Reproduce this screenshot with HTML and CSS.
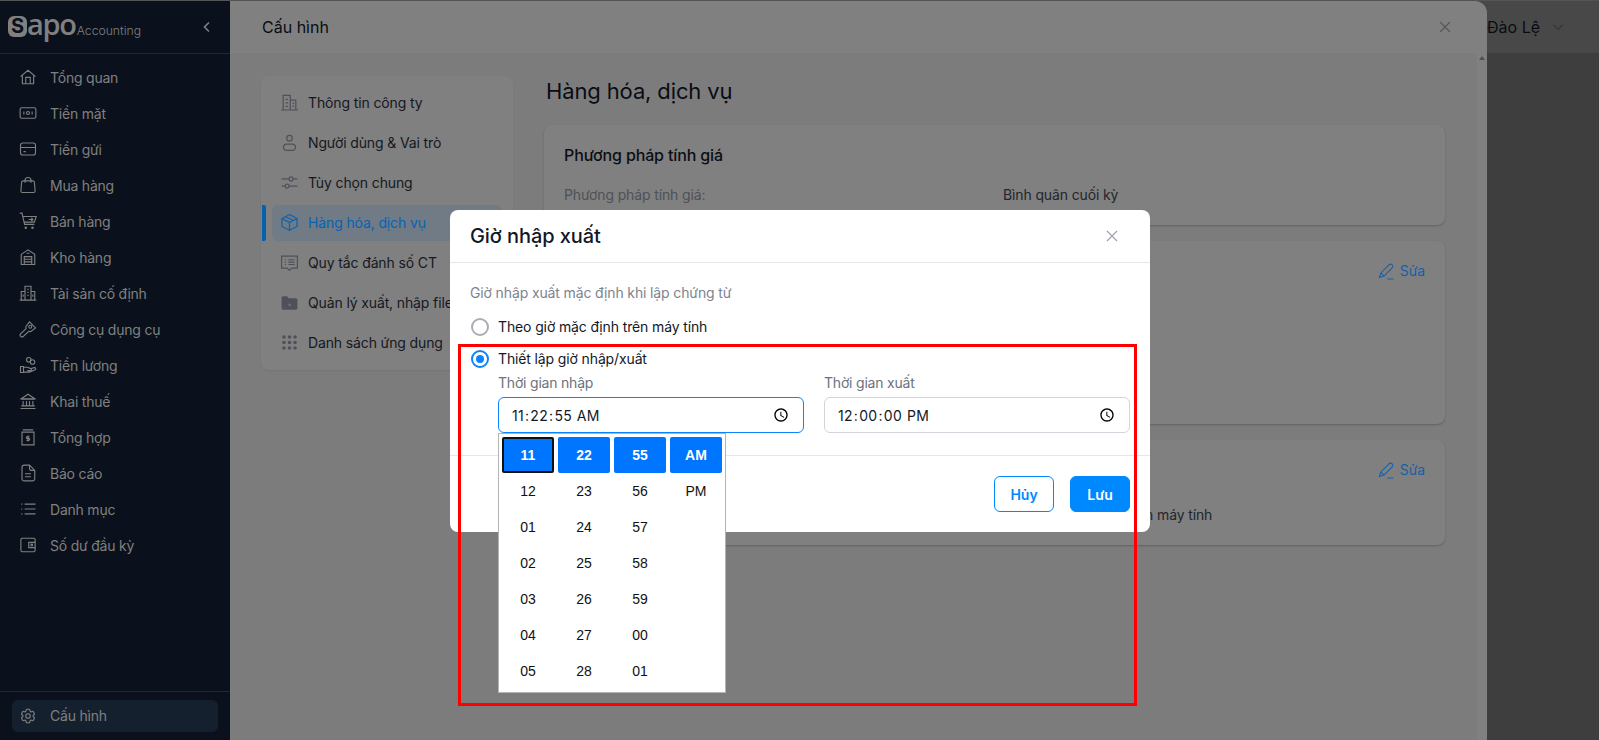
FILE: index.html
```html
<!DOCTYPE html>
<html lang="vi">
<head>
<meta charset="utf-8">
<title>Cấu hình</title>
<link rel="stylesheet" href="styles.css">
</head>
<body>
<div class="app">
  <aside class="sidebar">
    <div class="brand">
      <div class="logo"><span class="logo-s">S</span><span class="logo-apo">apo</span><span class="logo-acc">Accounting</span></div>
      <svg class="collapse" viewBox="0 0 12 12"><path d="M8 1.500 3.500 6 8 10.500"/></svg>
    </div>
    <nav class="menu">
      <a class="menu-item"><svg class="ic" viewBox="0 0 24 24"><path d="M2 11.500 12 3l10 8.500M4.500 9.500V21h15V9.500M9 21v-8.500h6V21"/></svg>Tổng quan</a>
      <a class="menu-item"><svg class="ic" viewBox="0 0 24 24"><rect x="1.500" y="5" width="21" height="14" rx="2"/><path d="M6.500 10v4M17.500 10v4"/><circle cx="12" cy="12" r="2"/></svg>Tiền mặt</a>
      <a class="menu-item"><svg class="ic" viewBox="0 0 24 24"><rect x="2" y="4" width="20" height="16" rx="3"/><path d="M2 10h20M6 15.500h3"/></svg>Tiền gửi</a>
      <a class="menu-item"><svg class="ic" viewBox="0 0 24 24"><path d="M5.500 6.500h13a2 2 0 0 1 2 1.800L21.500 20a2 2 0 0 1-2 2h-15a2 2 0 0 1-2-2l1-11.700a2 2 0 0 1 2-1.800ZM8 9V6a4 4 0 0 1 8 0v3"/></svg>Mua hàng</a>
      <a class="menu-item"><svg class="ic" viewBox="0 0 24 24"><path d="M1 1.500h3l3.500 15h13M5 6h18l-2.500 7.500H7M13 10h5.500M16.500 8l2 2-2 2"/><circle cx="9" cy="21" r="1"/><circle cx="18" cy="21" r="1"/></svg>Bán hàng</a>
      <a class="menu-item"><svg class="ic" viewBox="0 0 24 24"><path d="M3 8.500 12 2.500l9 6V22H3ZM7 22V11.500h10V22M7 15h10M7 18.500h10M10 7h4"/></svg>Kho hàng</a>
      <a class="menu-item"><svg class="ic" viewBox="0 0 24 24"><path d="M8 21V3h8v18M8 10H3v11M16 10h5v11M1 21.500h22M11 7h2M11 11h2M11 15h2M5.500 14v3M18.500 14v3"/></svg>Tài sản cố định</a>
      <a class="menu-item"><svg class="ic" viewBox="0 0 24 24"><path d="m9 9 5-6.500 8 8-6.500 5-2.500-.5-8 7.500H3L1.500 21v-2l8-7.500Z"/><circle cx="15" cy="9" r="2"/></svg>Công cụ dụng cụ</a>
      <a class="menu-item"><svg class="ic" viewBox="0 0 24 24"><circle cx="13" cy="5" r="3"/><circle cx="18" cy="8" r="3"/><path d="M2 14h4v8H2ZM6 15h5l4 1.500a1.500 1.500 0 0 1 0 3h-4M15 17l5.500-1.500a1.500 1.500 0 0 1 1 2.800L14 21.500H6"/></svg>Tiền lương</a>
      <a class="menu-item"><svg class="ic" viewBox="0 0 24 24"><path d="M3 9 12 3l9 6ZM3 9.500h18M5.500 12v6.500M10 12v6.500M14 12v6.500M18.500 12v6.500M3 18.500h18M2 22h20"/></svg>Khai thuế</a>
      <a class="menu-item"><svg class="ic" viewBox="0 0 24 24"><path d="M5 2.500h14M4 5.500h16v17H4ZM12 10v8M14 11.800h-3a1.200 1.200 0 0 0 0 2.400h2a1.200 1.200 0 0 1 0 2.400h-3"/></svg>Tổng hợp</a>
      <a class="menu-item"><svg class="ic" viewBox="0 0 24 24"><path d="M7 1.500h7l7 7V19a3 3 0 0 1-3 3.500H7A3 3 0 0 1 4 19V4.500a3 3 0 0 1 3-3ZM14 1.500v4a3 3 0 0 0 3 3h4M8 13h8M8 17h8"/></svg>Báo cáo</a>
      <a class="menu-item"><svg class="ic" viewBox="0 0 24 24"><path d="M7.500 5.500H22M7.500 12H22M7.500 18.500H22M3 5.500h1.500M3 12h1.500M3 18.500h1.500"/></svg>Danh mục</a>
      <a class="menu-item"><svg class="ic" viewBox="0 0 24 24"><rect x="2.500" y="3" width="19" height="18" rx="2"/><path d="M21.500 8.500H13v7h8.500"/><circle cx="17" cy="12" r="1.200"/></svg>Số dư đầu kỳ</a>
    </nav>
    <div class="side-foot">
      <a class="menu-item menu-item-active"><svg class="ic" viewBox="0 0 24 24"><path d="M9.594 3.940c.09-.542.56-.94 1.110-.94h2.593c.55 0 1.020.398 1.110.94l.213 1.281c.063.374.313.686.645.870.074.040.147.083.22.127.325.196.72.257 1.075.124l1.217-.456a1.125 1.125 0 0 1 1.370.49l1.296 2.247a1.125 1.125 0 0 1-.26 1.431l-1.003.827c-.293.241-.438.613-.43.992a7.723 7.723 0 0 1 0 .255c-.008.378.137.75.43.991l1.004.827c.424.35.534.955.26 1.430l-1.298 2.247a1.125 1.125 0 0 1-1.369.491l-1.217-.456c-.355-.133-.75-.072-1.076.124a6.470 6.470 0 0 1-.22.128c-.331.183-.581.495-.644.869l-.213 1.281c-.09.543-.56.94-1.110.94h-2.594c-.55 0-1.019-.398-1.110-.94l-.213-1.281c-.062-.374-.312-.686-.644-.87a6.520 6.520 0 0 1-.22-.127c-.325-.196-.72-.257-1.076-.124l-1.217.456a1.125 1.125 0 0 1-1.369-.49l-1.297-2.247a1.125 1.125 0 0 1 .26-1.431l1.004-.827c.292-.24.437-.613.43-.991a6.932 6.932 0 0 1 0-.255c.007-.38-.138-.751-.43-.992l-1.004-.827a1.125 1.125 0 0 1-.26-1.430l1.297-2.247a1.125 1.125 0 0 1 1.370-.491l1.216.456c.356.133.751.072 1.076-.124.072-.044.146-.086.22-.128.332-.183.582-.495.644-.869l.214-1.280Z"/><path d="M15 12a3 3 0 1 1-6 0 3 3 0 0 1 6 0Z"/></svg>Cấu hình</a>
    </div>
  </aside>

  <main class="main">
    <header class="topbar">
      <span class="user">Đào Lệ</span>
      <svg class="user-caret" viewBox="0 0 12 12"><path d="M1.500 4 6 8.500 10.500 4"/></svg>
    </header>
    <div class="main-rest"></div>
  </main>
</div>

<section class="drawer">
  <header class="drawer-head">
    <h2 class="drawer-title">Cấu hình</h2>
    <svg class="x x-drawer" viewBox="0 0 12 12"><path d="M1 1l10 10M11 1 1 11"/></svg>
  </header>
  <div class="drawer-body">
    <div class="drawer-scroll">
      <nav class="cfg-nav">
        <a class="cfg-item"><svg class="ic ic-cfg" viewBox="0 0 24 24"><path d="M4 21V3h9v18M13 9h7v12M1.500 21.500h21M7 8h3M7 12.500h3M7 17h3M16 13h2M16 17h2"/></svg>Thông tin công ty</a>
        <a class="cfg-item"><svg class="ic ic-cfg" viewBox="0 0 24 24"><circle cx="12" cy="6.500" r="3.500"/><rect x="4.500" y="14" width="15" height="8" rx="4"/></svg>Người dùng &amp; Vai trò</a>
        <a class="cfg-item"><svg class="ic ic-cfg" viewBox="0 0 24 24"><circle cx="14" cy="7.500" r="2.500"/><circle cx="9" cy="16.500" r="2.500"/><path d="M2 7.500h9.500M16.500 7.500H22M2 16.500h4.500M11.500 16.500H22"/></svg>Tùy chọn chung</a>
        <a class="cfg-item cfg-item-active"><svg class="ic ic-cfg" viewBox="0 0 24 24"><path d="m12 2 9.500 5v10L12 22l-9.500-5V7ZM2.500 7l9.500 5 9.500-5M12 12v10M7 4.500l9.500 5"/></svg>Hàng hóa, dịch vụ</a>
        <a class="cfg-item"><svg class="ic ic-cfg" viewBox="0 0 24 24"><path d="M2 4h20v15h-7l-3 3-3-3H2ZM10.500 8.500h8M10.500 11.500h8M10.500 14.500h8M6 8.500h1.500M6 11.500h1.500M6 14.500h1.500"/></svg>Quy tắc đánh số CT</a>
        <a class="cfg-item"><svg class="ic ic-cfg ic-fill" viewBox="0 0 24 24"><path d="M2 6a2 2 0 0 1 2-2h5l2 2.500h9a2 2 0 0 1 2 2V19a2 2 0 0 1-2 2H4a2 2 0 0 1-2-2Z"/><path class="ic-notch" d="M14.500 16 11 13v3h3"/></svg>Quản lý xuất, nhập file</a>
        <a class="cfg-item"><svg class="ic ic-cfg ic-fill" viewBox="0 0 24 24"><circle cx="5" cy="5" r="2.300"/><circle cx="12" cy="5" r="2.300"/><circle cx="19" cy="5" r="2.300"/><circle cx="5" cy="12" r="2.300"/><circle cx="12" cy="12" r="2.300"/><circle cx="19" cy="12" r="2.300"/><circle cx="5" cy="19" r="2.300"/><circle cx="12" cy="19" r="2.300"/><circle cx="19" cy="19" r="2.300"/></svg>Danh sách ứng dụng</a>
      </nav>
      <div class="cfg-content">
        <h1 class="cfg-title">Hàng hóa, dịch vụ</h1>
        <article class="card card-price">
          <h3 class="card-title">Phương pháp tính giá</h3>
          <div class="row"><span class="row-label">Phương pháp tính giá:</span><span class="row-value">Bình quân cuối kỳ</span></div>
        </article>
        <article class="card card-mid">
          <a class="edit"><svg class="edit-ic" viewBox="0 0 24 24"><path d="M2 20.500 4 14 15.500 2.500a3 3 0 0 1 4.500 4.500L8.500 18.500ZM4 14l4.500 4.500M13 22.500h9"/></svg>Sửa</a>
        </article>
        <article class="card card-time">
          <a class="edit"><svg class="edit-ic" viewBox="0 0 24 24"><path d="M2 20.500 4 14 15.500 2.500a3 3 0 0 1 4.500 4.500L8.500 18.500ZM4 14l4.500 4.500M13 22.500h9"/></svg>Sửa</a>
          <div class="row row-time"><span></span><span class="row-value">Theo giờ mặc định trên máy tính</span></div>
        </article>
      </div>
    </div>
    <div class="scrollbar"><span class="scroll-up"></span></div>
  </div>
</section>

<section class="modal">
  <header class="modal-head">
    <h2 class="modal-title">Giờ nhập xuất</h2>
    <svg class="x x-modal" viewBox="0 0 12 12"><path d="M1 1l10 10M11 1 1 11"/></svg>
  </header>
  <div class="modal-body">
    <p class="hint">Giờ nhập xuất mặc định khi lập chứng từ</p>
    <label class="radio"><span class="dot"></span>Theo giờ mặc định trên máy tính</label>
    <label class="radio"><span class="dot dot-on"></span>Thiết lập giờ nhập/xuất</label>
    <div class="times">
      <div class="field">
        <span class="field-label">Thời gian nhập</span>
        <input class="time time-focus" type="time" step="1" value="11:22:55">
      </div>
      <div class="field">
        <span class="field-label">Thời gian xuất</span>
        <input class="time" type="time" step="1" value="12:00:00">
      </div>
    </div>
  </div>
  <footer class="modal-foot">
    <button class="btn btn-line">Hủy</button>
    <button class="btn btn-solid">Lưu</button>
  </footer>
  <div class="picker">
    <div class="pick-col"><span class="cell cell-on cell-cur">11</span><span class="cell">12</span><span class="cell">01</span><span class="cell">02</span><span class="cell">03</span><span class="cell">04</span><span class="cell">05</span></div>
    <div class="pick-col"><span class="cell cell-on">22</span><span class="cell">23</span><span class="cell">24</span><span class="cell">25</span><span class="cell">26</span><span class="cell">27</span><span class="cell">28</span></div>
    <div class="pick-col"><span class="cell cell-on">55</span><span class="cell">56</span><span class="cell">57</span><span class="cell">58</span><span class="cell">59</span><span class="cell">00</span><span class="cell">01</span></div>
    <div class="pick-col"><span class="cell cell-on">AM</span><span class="cell">PM</span></div>
  </div>
</section>

<div class="annotation"></div>
</body>
</html>
```
FILE: styles.css
```css
* { box-sizing: border-box; }
html, body { margin: 0; height: 100%; overflow: hidden; }
body { font-family: Inter, "Noto Sans", sans-serif; font-size: 14px; letter-spacing: -.13px; color: #090c13; position: relative; width: 1599px; height: 740px; background: #3e3e3e; border-top: 1px solid #545454; }
h1, h2, h3, p { margin: 0; font-weight: 500; }
a { color: inherit; text-decoration: none; }

.app { display: flex; height: 739px; }

/* sidebar */
.sidebar { width: 230px; flex: none; display: flex; flex-direction: column; background: #0a111c; color: #808080; letter-spacing: -.22px; }
.brand { height: 53px; flex: none; display: flex; align-items: center; justify-content: space-between; padding: 0 17px 0 8px; border-bottom: 1px solid #21262f; }
.logo { display: flex; align-items: center; letter-spacing: 0; }
.logo-s { width: 19px; height: 21px; margin-top: -2px; border-radius: 6px; background: #808080; color: #0a111c; font-weight: 700; font-size: 20px; line-height: 21px; text-align: center; }
.logo-apo { font-family: "Open Sans", sans-serif; font-weight: 600; font-size: 29px; line-height: 30px; letter-spacing: -1.300px; margin: -6px 0 0 0; }
.logo-acc { font-weight: 300; font-size: 12.200px; margin: 7px 0 0 1px; }
.collapse { width: 12px; height: 12px; fill: none; stroke: #808080; stroke-width: 1.6; }
.menu { flex: 1; padding-top: 5px; }
.menu-item { display: flex; align-items: center; gap: 13px; height: 36px; padding-left: 19px; }
.ic { width: 18px; height: 18px; flex: none; fill: none; stroke: currentColor; stroke-width: 1.5; }
.side-foot { flex: none; height: 49px; border-top: 1px solid #21262f; padding: 8px 12px; }
.menu-item-active { height: 32px; padding-left: 7px; padding-bottom: 1px; border-radius: 6px; background: #15202f; }

/* top bar */
.main { flex: 1; display: flex; flex-direction: column; }
.topbar { height: 52px; flex: none; display: flex; align-items: center; gap: 12px; padding: 0 35px 0 0; justify-content: flex-end; background: #484848; font-size: 16px; letter-spacing: 0; }
.user { line-height: 52px; }
.user-caret { width: 12px; height: 12px; fill: none; stroke: #363636; stroke-width: 1.2; }
.main-rest { flex: 1; background: #3e3e3e; }

/* drawer */
.drawer { position: absolute; left: 230px; top: 0; width: 1257px; height: 739px; display: flex; flex-direction: column; background: #808080; border-radius: 0 12px 0 0; overflow: hidden; }
.drawer-head { height: 52px; flex: none; display: flex; align-items: center; justify-content: space-between; padding: 0 36px 0 32px; }
.drawer-title { font-size: 16px; font-weight: 400; letter-spacing: 0; }
.x { width: 12px; height: 12px; fill: none; stroke: #565656; stroke-width: 1.2; }
.drawer-body { flex: 1; display: flex; background: #7c7c7c; }
.drawer-scroll { flex: 1; display: flex; gap: 31px; padding: 23px 32px 0 31px; align-items: flex-start; }
.scrollbar { width: 10px; flex: none; background: #808080; display: flex; justify-content: center; }
.scroll-up { width: 0; height: 0; margin-top: 3px; border: 3px solid transparent; border-top: 0; border-bottom: 4px solid #505050; }

.cfg-nav { width: 252px; flex: none; height: 294px; padding: 9px 0; background: #808080; border-radius: 8px; box-shadow: 0 1px 2px rgba(0,0,0,.06); }
.cfg-item { display: flex; align-items: center; gap: 9px; height: 36px; margin: 0 11px 4px; padding: 0 0 2px 8px; border-radius: 6px; color: #14181f; position: relative; }
.ic-cfg { width: 19px; height: 19px; color: #4e5158; }
.ic-fill { fill: currentColor; stroke: none; }
.ic-notch { fill: #808080; }
.cfg-item-active { background: #707b85; color: #0663b5; }
.cfg-item-active .ic-cfg { color: #0663b5; }
.cfg-item-active::before { content: ""; position: absolute; left: -10px; top: 0; width: 4px; height: 36px; border-radius: 0 2px 2px 0; background: #0460b0; }

.cfg-content { flex: 1; min-width: 0; }
.cfg-title { font-size: 22px; font-weight: 400; line-height: 30px; margin: 0 0 19px 2px; }
.card { position: relative; background: #808080; border-radius: 8px; padding: 20px; margin-bottom: 16px; box-shadow: 0 1px 2px rgba(0,0,0,.22); }
.card-price { height: 100px; }
.card-mid { height: 183px; }
.card-time { height: 105px; }
.card-title { font-size: 16px; line-height: 20px; margin-bottom: 20px; color: #0b0e15; }
.row { display: grid; grid-template-columns: 439px 1fr; line-height: 20px; }
.row-time { position: absolute; left: 20px; right: 20px; top: 65px; }
.row-label { color: #4e5158; }
.row-value { color: #22262d; }
.edit { position: absolute; right: 20px; top: 20px; display: flex; align-items: center; gap: 5px; line-height: 20px; color: #1560a8; }
.edit-ic { width: 17px; height: 17px; fill: none; stroke: currentColor; stroke-width: 1.5; }

/* modal */
.modal { position: absolute; left: 450px; top: 209px; width: 700px; height: 322px; background: #fff; border-radius: 8px; display: flex; flex-direction: column; color: #111827; }
.modal-head { height: 53px; flex: none; display: flex; align-items: center; justify-content: space-between; padding: 0 32px 0 20px; border-bottom: 1px solid #e5e7eb; }
.modal-title { font-size: 20px; letter-spacing: -.08px; }
.x-modal { stroke: #9ca3af; }
.modal-body { height: 193px; flex: none; padding: 20px 20px 0; border-bottom: 1px solid #e5e7eb; }
.hint { font-weight: 400; line-height: 20px; color: #7d848f; margin-bottom: 14px; }
.radio { display: flex; align-items: center; gap: 9px; height: 20px; margin-bottom: 12px; padding-left: 1px; line-height: 20px; }
.dot { width: 18px; height: 18px; flex: none; border-radius: 50%; border: 2px solid #a9adb3; background: #fff; position: relative; }
.dot-on { border-color: #0a84ff; }
.dot-on::after { content: ""; position: absolute; inset: 3px; border-radius: 50%; background: #0a84ff; }
.times { display: flex; gap: 20px; margin: -8px 0 0 28px; }
.field { width: 306px; display: flex; flex-direction: column; gap: 4px; }
.field-label { line-height: 20px; color: #6b7280; letter-spacing: -.2px; }
.time { width: 100%; height: 36px; padding: 0 14px 0 12px; border: 1px solid #d1d5db; border-radius: 6px; background: #fff; font-family: Inter, sans-serif; font-size: 14px; letter-spacing: .3px; color: #111827; outline: none; }
.time::-webkit-calendar-picker-indicator { width: 16px; height: 16px; margin: 0; padding: 0; }
.time-focus { border-color: #0a84ff; }
.modal-foot { flex: 1; display: flex; justify-content: flex-end; gap: 16px; padding: 20px 20px 0; }
.btn { width: 60px; height: 36px; border-radius: 6px; font-family: Inter, sans-serif; font-size: 14px; font-weight: 600; }
.btn-line { background: #fff; border: 1px solid #0088ff; color: #0088ff; }
.btn-solid { background: #0088ff; border: 1px solid #0088ff; color: #fff; }

/* time picker popup */
.picker { position: absolute; left: 48px; top: 223px; width: 228px; height: 260px; display: flex; gap: 4px; padding: 3px; background: #fff; border: 1px solid #b4b4b4; font-family: "Liberation Sans", Arial, sans-serif; font-size: 14px; letter-spacing: 0; color: #111; }
.pick-col { width: 52px; display: flex; flex-direction: column; }
.cell { height: 36px; flex: none; display: flex; align-items: center; justify-content: center; }
.cell-on { background: #0075ff; color: #fff; font-weight: 700; border-radius: 2px; }
.cell-cur { border: 2px solid #101010; }

/* red annotation frame */
.annotation { position: absolute; left: 458px; top: 343px; width: 679px; height: 362px; border: 3px solid #ff0000; pointer-events: none; }
```
